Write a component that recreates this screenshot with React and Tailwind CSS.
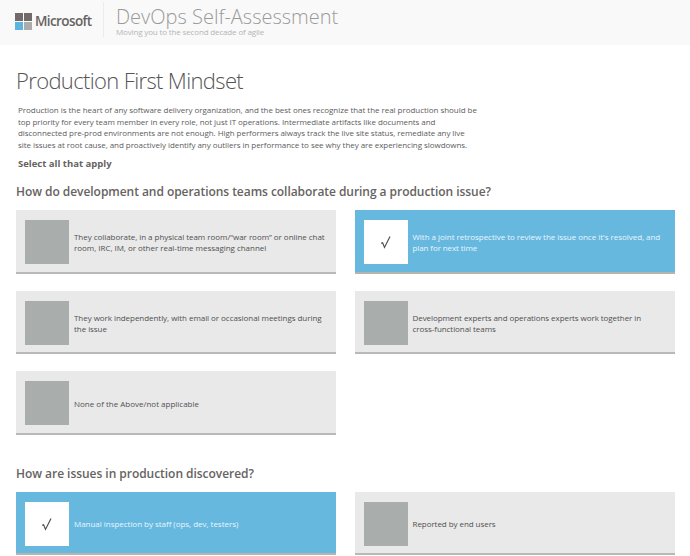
import React from "react";

const collaboration = [
  { lines: [["They collaborate, in a physical team room/“war room” or online chat", "tracking-[-0.04px]"], ["room, IRC, IM, or other real-time messaging channel", "tracking-[-0.03px]"]] },
  { checked: true, lines: [["With a joint retrospective to review the issue once it's resolved, and", "tracking-[-0.035px]"], ["plan for next time", "tracking-[-0.1px]"]] },
  { lines: [["They work independently, with email or occasional meetings during", "tracking-[-0.05px]"], ["the issue", "tracking-[-0.05px]"]] },
  { lines: [["Development experts and operations experts work together in", "tracking-[-0.07px]"], ["cross-functional teams", "tracking-[-0.06px]"]] },
  { lines: [["None of the Above/not applicable", "tracking-[0px]"]] },
];

const discovery = [
  { checked: true, lines: [["Manual inspection by staff (ops, dev, testers)", "tracking-[-0.03px]"]] },
  { lines: [["Reported by end users", "tracking-[-0.06px]"]] },
];

function Option({ checked, lines }) {
  return (
    <button
      className={`flex h-[63.5px] w-full items-center border-b-2 pt-[2px] pl-[9.25px] text-left ${
        checked ? "border-[#b5b5b0] bg-[#67b8df] text-[#e9f6fc]" : "border-[#b9b9b9] bg-[#e9e9e9] text-[#505050]"
      }`}
    >
      <span className={`flex size-11 shrink-0 items-center justify-center ${checked ? "bg-white" : "bg-[#a9adac]"}`}>
        {checked && (
          <svg viewBox="0 0 12 14" className="h-3.5 w-3" fill="none" stroke="#505050" strokeWidth="1.2">
            <path d="M1.2 8.4 L2.6 7.8 L4.5 12.4 L10 1.5" />
          </svg>
        )}
      </span>
      <span className="ml-[4.75px] flex flex-col text-[8px] leading-[11px]">
        {lines.map(([text, tracking]) => (
          <span key={text} className={`self-start whitespace-nowrap ${tracking}`}>{text}</span>
        ))}
      </span>
    </button>
  );
}

function Options({ items }) {
  return (
    <div className="grid w-[658.5px] grid-cols-2 gap-x-[18.5px] gap-y-[17px]">
      {items.map((item) => (
        <Option key={item.lines[0][0]} {...item} />
      ))}
    </div>
  );
}

export default function App() {
  return (
    <div className="h-[556px] w-[690px] overflow-hidden bg-white font-['Open_Sans','Noto_Sans',sans-serif] text-[#666361]">
      <header className="flex h-[45px] bg-[#f9f9f9] pl-[15px]">
        <svg viewBox="0 0 17 17" className="mt-[13px] size-[17px]">
          <path fill="#706b69" d="M0 0h8v8H0zM9 0h8v8H9z" />
          <path fill="#5db4df" d="M0 9h8v8H0z" />
          <path fill="#aaadac" d="M9 9h8v8H9z" />
        </svg>
        <span className="mt-[11px] ml-[3px] w-[56px] whitespace-nowrap text-[13.5px] font-semibold leading-5 tracking-[-0.6px]">Microsoft</span>
        <div className="ml-[12px] mt-[2px] h-[35px] w-px bg-[#ececec]" />
        <div className="ml-[12px] pt-[5px]">
          <div className="whitespace-nowrap text-[20px] font-light leading-[23px] text-[#999]">DevOps Self-Assessment</div>
          <div className="-mt-px whitespace-nowrap text-[8px] leading-[9px] tracking-[-0.15px] text-[#b5b5b5]">Moving you to the second decade of agile</div>
        </div>
      </header>
      <main className="pl-4">
        <h1 className="mt-[20px] whitespace-nowrap text-[22px] font-light leading-[30px] tracking-[-0.64px] text-[#555]">
          <span>Production First Mindset</span>
        </h1>
        <div className="mt-[9px] flex flex-col items-start whitespace-nowrap pl-[2px] text-[8px] leading-[11.6px] text-[#5c5c5c]">
          <span className="tracking-[-0.04px]">Production is the heart of any software delivery organization, and the best ones recognize that the real production should be</span>
          <span className="tracking-[-0.055px]">top priority for every team member in every role, not just IT operations. Intermediate artifacts like documents and</span>
          <span className="tracking-[-0.055px]">disconnected pre-prod environments are not enough. High performers always track the live site status, remediate any live</span>
          <span className="tracking-[-0.05px]">site issues at root cause, and proactively identify any outliers in performance to see why they are experiencing slowdowns.</span>
        </div>
        <div className="mt-[8px] pl-[2px] text-[9.5px] font-bold leading-[12px]"><span>Select all that apply</span></div>
        <h2 className="mt-[13px] mb-[9px] whitespace-nowrap text-[12px] font-semibold leading-[18px] tracking-[-0.05px]">
          <span>How do development and operations teams collaborate during a production issue?</span>
        </h2>
        <Options items={collaboration} />
        <h2 className="mt-[30px] mb-[9px] whitespace-nowrap text-[12px] font-semibold leading-[18px] tracking-[-0.04px]">
          <span>How are issues in production discovered?</span>
        </h2>
        <Options items={discovery} />
      </main>
    </div>
  );
}
